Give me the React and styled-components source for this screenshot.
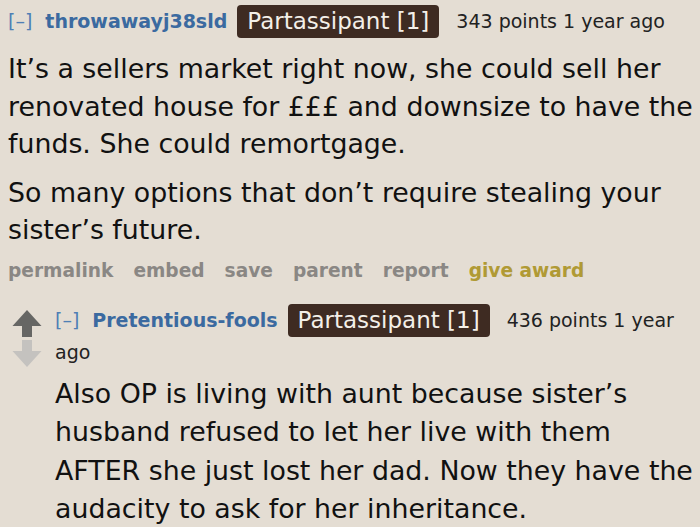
import React from "react";
import styled, { createGlobalStyle } from "styled-components";

const GlobalStyle = createGlobalStyle`
  body {
    margin: 0;
    background: #e4ddd3;
    font-family: "DejaVu Sans", Verdana, sans-serif;
    color: #111;
  }
`;

const Page = styled.div`
  width: 700px;
  height: 527px;
  overflow: hidden;
  padding: 5px 0 0 8px;
  box-sizing: border-box;
`;

const Tagline = styled.div`
  display: flex;
  align-items: center;
  font-size: 19px;
  line-height: ${({ $compact }) => ($compact ? 31 : 33)}px;
  white-space: nowrap;
`;

const Collapse = styled.span`
  color: #4f7fb5;
  margin-right: 13px;
`;

const Author = styled.span`
  color: #3b6aa0;
  font-weight: bold;
  margin-right: 10px;
`;

const Flair = styled.span`
  background: #3e2b22;
  color: #f3efe8;
  font-size: 23px;
  height: 33px;
  line-height: 33px;
  padding: 0 10px;
  border-radius: 4px;
  margin-right: 17px;
`;

const Score = styled.span`
  color: #222;
`;

const Body = styled.div`
  font-size: 26.8px;
  line-height: ${({ $lh }) => $lh}px;
  margin-top: ${({ $top }) => $top}px;
  p {
    margin: 0 0 11px;
    white-space: nowrap;
  }
`;

const Buttons = styled.div`
  display: flex;
  gap: 20px;
  font-size: 18.6px;
  font-weight: bold;
  color: #8a8784;
  margin-top: 9px;
`;

const Award = styled.span`
  color: #b09a35;
`;

const Child = styled.div`
  display: flex;
  margin-top: 23px;
`;

const Voting = styled.div`
  width: 47px;
  display: flex;
  flex-direction: column;
  align-items: flex-start;
  gap: 3px;
  padding: 6px 0 0 4px;
  box-sizing: border-box;
  flex-shrink: 0;
`;

const Entry = styled.div`
  flex: 1;
`;

const Arrow = ({ down, color }) => (
  <svg width="30" height="27" viewBox="0 0 30 27">
    <g transform={down ? "rotate(180 15 13.5)" : undefined}>
      <path d="M15 0 L29.5 16 L20 16 L20 27 L10 27 L10 16 L0.5 16 Z" fill={color} />
    </g>
  </svg>
);

export default function App() {
  return (
    <Page>
      <GlobalStyle />
      <Tagline>
        <Collapse>[–]</Collapse>
        <Author>throwawayj38sld</Author>
        <Flair>Partassipant [1]</Flair>
        <Score>343 points 1 year ago</Score>
      </Tagline>
      <Body $lh={37.5} $top={12}>
        <p>
          It’s a sellers market right now, she could sell her
          <br />
          renovated house for £££ and downsize to have the
          <br />
          funds. She could remortgage.
        </p>
        <p>
          So many options that don’t require stealing your
          <br />
          sister’s future.
        </p>
      </Body>
      <Buttons>
        <span>permalink</span>
        <span>embed</span>
        <span>save</span>
        <span>parent</span>
        <span>report</span>
        <Award>give award</Award>
      </Buttons>
      <Child>
        <Voting>
          <Arrow color="#666664" />
          <Arrow down color="#c4c2bf" />
        </Voting>
        <Entry>
          <Tagline>
            <Collapse>[–]</Collapse>
            <Author>Pretentious-fools</Author>
            <Flair>Partassipant [1]</Flair>
            <Score>436 points 1 year</Score>
          </Tagline>
          <Tagline $compact>
            <Score>ago</Score>
          </Tagline>
          <Body $lh={38.5} $top={7}>
            <p>
              Also OP is living with aunt because sister’s
              <br />
              husband refused to let her live with them
              <br />
              AFTER she just lost her dad. Now they have the
              <br />
              audacity to ask for her inheritance.
            </p>
          </Body>
        </Entry>
      </Child>
    </Page>
  );
}
